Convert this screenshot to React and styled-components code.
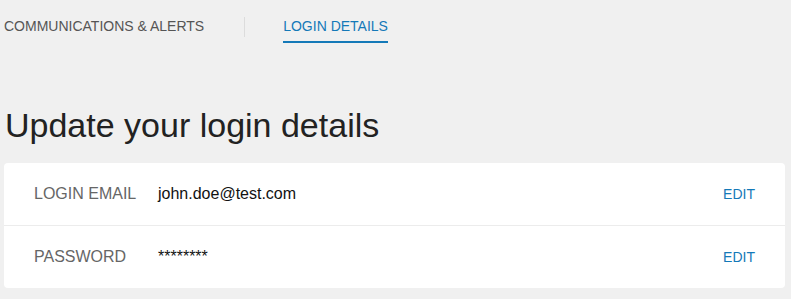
import styled, { createGlobalStyle } from 'styled-components'

const GlobalStyle = createGlobalStyle`
  html, body {
    margin: 0;
    padding: 0;
    background: #f0f0f0;
    font-family: "Liberation Sans", Arial, sans-serif;
  }
`

const Page = styled.div`
  padding: 0 6px 0 4px;
`

const Tabs = styled.nav`
  display: flex;
  align-items: stretch;
  height: 44px;
`

const Tab = styled.a`
  display: flex;
  align-items: flex-end;
  box-sizing: border-box;
  height: 43px;
  padding-bottom: 7px;
  font-size: 14px;
  line-height: 16px;
  text-transform: uppercase;
  text-decoration: none;
  cursor: pointer;
  color: ${({ active }) => (active ? '#1479b8' : '#555')};
  border-bottom: 2px solid ${({ active }) => (active ? '#1479b8' : 'transparent')};
`

const TabDivider = styled.span`
  width: 1px;
  height: 20px;
  margin: 17px 38px 0 40px;
  background: #dcdcdc;
`

const Heading = styled.h1`
  margin: 61px 0 0 1px;
  font-size: 34px;
  font-weight: 400;
  line-height: 40px;
  color: #222;
`

const Card = styled.section`
  margin-top: 18px;
  background: #fff;
  border-radius: 4px;
`

const Row = styled.div`
  display: flex;
  align-items: center;
  height: 62px;
  padding: 0 30px;
  border-top: ${({ first }) => (first ? 'none' : '1px solid #ececec')};
`

const Label = styled.span`
  width: 124px;
  font-size: 16px;
  color: #666;
  text-transform: uppercase;
`

const Value = styled.span`
  flex: 1;
  font-size: 16px;
  color: #111;
`

const EditButton = styled.button`
  border: none;
  background: none;
  padding: 0;
  font-family: inherit;
  font-size: 14px;
  color: #1479b8;
  cursor: pointer;
`

const rows = [
  { label: 'Login email', value: 'john.doe@test.com' },
  { label: 'Password', value: '********' },
]

const App = () => (
  <>
    <GlobalStyle />
    <Page>
      <Tabs>
        <Tab>Communications &amp; Alerts</Tab>
        <TabDivider />
        <Tab active>Login details</Tab>
      </Tabs>
      <Heading>Update your login details</Heading>
      <Card>
        {rows.map(({ label, value }, i) => (
          <Row key={label} first={i === 0}>
            <Label>{label}</Label>
            <Value>{value}</Value>
            <EditButton>EDIT</EditButton>
          </Row>
        ))}
      </Card>
    </Page>
  </>
)

export default App
